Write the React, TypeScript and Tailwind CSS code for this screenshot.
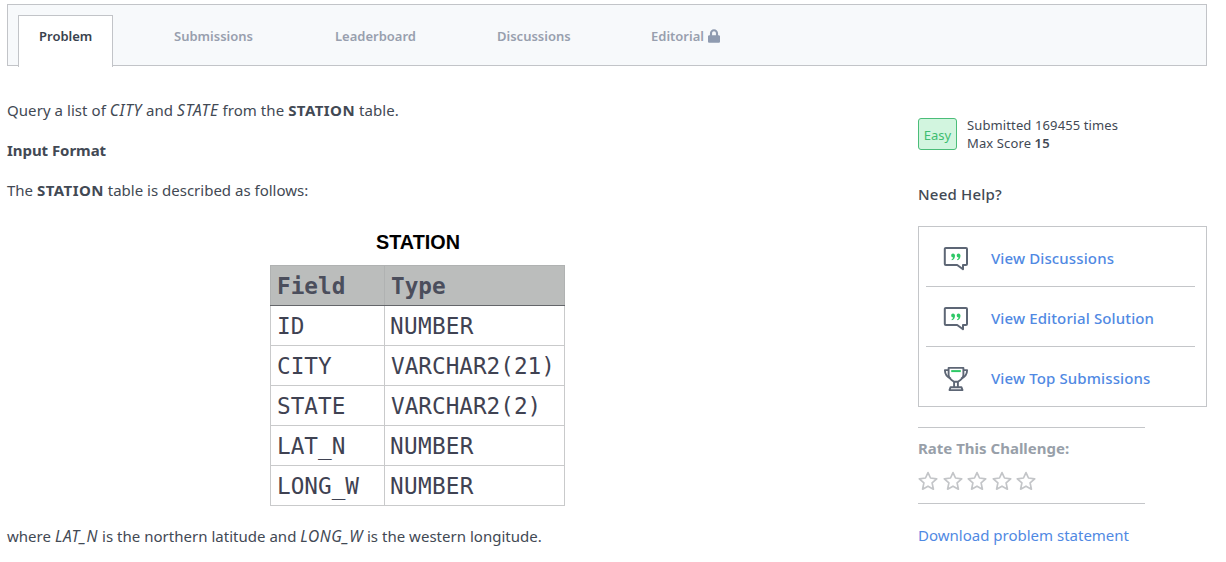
import React from "react";
import { FaLock } from "react-icons/fa";

const rows = [
  ["ID", "NUMBER"],
  ["CITY", "VARCHAR2(21)"],
  ["STATE", "VARCHAR2(2)"],
  ["LAT_N", "NUMBER"],
  ["LONG_W", "NUMBER"],
];

function DiscussionIcon() {
  return (
    <svg className="mt-1" width="26" height="26" viewBox="0 0 26 26" fill="none">
      <path d="M2.8 2H23a1 1 0 0 1 1 1v15a1 1 0 0 1-1 1h-3v4.300L14.200 19H2.800a1 1 0 0 1-1-1V3a1 1 0 0 1 1-1Z" stroke="#5d6675" strokeWidth="2" strokeLinejoin="round" />
      <g fill="#2ec866">
        <path d="M10 7.400c1.300 0 2 1 2 2.400 0 2.200-1.200 4-3.200 4.500l-.3-.8c1.100-.5 1.600-1.200 1.600-2-1.100 0-1.900-.8-1.900-2s.7-2.100 1.800-2.100Z" />
        <path d="M15.500 7.400c1.300 0 2 1 2 2.400 0 2.200-1.200 4-3.200 4.500l-.3-.8c1.100-.5 1.600-1.200 1.600-2-1.100 0-1.900-.8-1.900-2s.7-2.100 1.800-2.100Z" />
      </g>
    </svg>
  );
}

function TrophyIcon() {
  return (
    <svg className="mt-1" width="26" height="26" viewBox="0 0 26 26" fill="none" stroke="#5d6675" strokeWidth="1.900" strokeLinejoin="round">
      <path d="M5.600 1.900h14.800v7c0 3.300-3.300 5.400-5.600 6.900h-3.600c-2.300-1.500-5.600-3.600-5.600-6.900Z" />
      <path d="M5.600 4.100H1.900c0 4.200 1.900 6.900 6 8.600M20.400 4.100h3.700c0 4.200-1.900 6.900-6 8.600" />
      <path d="M11.100 16v5M14.900 16v5M7.500 21.200h11l1 2.900H6.500Z" />
      <path d="M8.200 5.100h9.600" stroke="#2ec866" strokeWidth="2" />
    </svg>
  );
}

function Star() {
  return (
    <svg width="20" height="20" viewBox="0 0 20 20" fill="none" stroke="#c3c5c8" strokeWidth="1.7" strokeLinejoin="round">
      <path d="M10 1.600l2.500 5.400 6.200.8-4.600 4 1.300 6.400L10 15.200l-5.400 3 1.300-6.400-4.600-4 6.200-.8Z" />
    </svg>
  );
}

function Em({ children }: { children: React.ReactNode }) {
  return <em className="text-[15.500px] tracking-[0.600px]">{children}</em>;
}

function HelpLink({ icon, children, last }: { icon: React.ReactNode; children: React.ReactNode; last?: boolean }) {
  return (
    <a className={last ? "flex h-[60px] items-center pl-[17px]" : "flex h-[60px] items-center border-b border-[#c4c6c9] pl-[17px]"}>
      {icon}
      <span className="ml-[22px] pt-[3px] text-[15px] font-medium tracking-[0.120px] text-[#5089e3]">{children}</span>
    </a>
  );
}

export default function App() {
  return (
    <div className="h-[562px] w-[1226px] overflow-hidden bg-white pl-[7px] pt-1 font-['Noto_Sans',sans-serif] text-[#424954]">
      <nav className="flex h-[62px] w-[1200px] border border-[#c2c4c8] bg-[#f7f9fb] pl-[10px] pt-[10px] text-[13px] font-semibold text-[#989fae]">
        <a className="h-[52px] w-[95px] shrink-0 border border-b-0 border-[#c2c4c8] bg-white pl-5 pt-[10px] leading-5 text-[#39424e]">Problem</a>
        <a className="ml-[61px] w-[161px] pt-[11px] leading-5">Submissions</a>
        <a className="w-[162px] pt-[11px] leading-5">Leaderboard</a>
        <a className="w-[154px] pt-[11px] leading-5">Discussions</a>
        <a className="flex pt-[11px] leading-5">Editorial<FaLock className="ml-1 mt-[3px] h-[14px] w-3 text-[#8f9bb0]" /></a>
      </nav>
      <div className="flex">
        <main className="w-[911px] pt-8 text-[15px] leading-6">
          <p className="tracking-[0.060px]">Query a list of <Em>CITY</Em> and <Em>STATE</Em> from the <strong className="tracking-[0.450px]">STATION</strong> table.</p>
          <p className="mt-4"><strong className="tracking-[-0.050px]">Input Format</strong></p>
          <p className="mt-4">The <strong className="tracking-[0.450px]">STATION</strong> table is described as follows:</p>
          <div className="ml-[263px] mt-[28px] w-[294px]">
            <h2 className="pl-[2px] text-center font-['Liberation_Sans',sans-serif] text-[19.800px] font-bold leading-6 text-black">STATION</h2>
            <table className="mt-[11px] w-[294px] table-fixed border-collapse font-['DejaVu_Sans_Mono',monospace] text-[22.700px] leading-[38px] text-[#3f4252]">
              <colgroup><col className="w-[114px]" /><col className="w-[180px]" /></colgroup>
              <thead>
                <tr className="h-[40px] bg-[#bbbdbc] text-left">
                  <th className="border border-[#b0b2b2] border-b-[#64666a] p-0 pl-[6px] pt-px text-[#4b4e5c]">Field</th>
                  <th className="border border-[#b0b2b2] border-b-[#64666a] p-0 pl-[6px] pt-px text-[#4b4e5c]">Type</th>
                </tr>
              </thead>
              <tbody>
                {rows.map(([field, type]) => (
                  <tr key={field} className="h-[40px]">
                    <td className="border border-[#c9cacb] p-0 pl-[6px] pt-px">{field}</td>
                    <td className={type === "NUMBER" ? "border border-[#c9cacb] p-0 pl-[5px] pt-px tracking-[0.300px]" : "border border-[#c9cacb] p-0 pl-[6px] pt-px"}>{type}</td>
                  </tr>
                ))}
              </tbody>
            </table>
          </div>
          <p className="mt-[18px] tracking-[0.020px]">where <Em>LAT_N</Em> is the northern latitude and <Em>LONG_W</Em> is the western longitude.</p>
        </main>
        <aside className="w-[289px] pt-[50px]">
          <div className="flex items-start">
            <span className="mt-[2px] h-8 w-[39px] rounded-[3px] border border-[#4bbd79] bg-[#d2f5df] text-center text-[13px] leading-[32px] text-[#3fbd70]">Easy</span>
            <div className="ml-[10px] text-[13px] leading-[18px] tracking-[0.120px]">
              <p>Submitted 169455 times</p>
              <p>Max Score <strong className="font-semibold">15</strong></p>
            </div>
          </div>
          <h3 className="mt-[30px] text-[15px] font-medium leading-6 tracking-[0.200px]">Need Help?</h3>
          <div className="mt-[20px] h-[181px] border border-[#c4c6c9] pl-[7px] pr-[11px]">
            <HelpLink icon={<DiscussionIcon />}>View Discussions</HelpLink>
            <HelpLink icon={<DiscussionIcon />}>View Editorial Solution</HelpLink>
            <HelpLink icon={<TrophyIcon />} last>View Top Submissions</HelpLink>
          </div>
          <div className="mt-5 h-[77px] w-[227px] border-y border-[#c4c6c9] pt-2">
            <h4 className="text-[15px] font-bold leading-6 text-[#989fa9]">Rate This Challenge:</h4>
            <div className="mt-[11px] flex gap-[4.600px]">
              {[1, 2, 3, 4, 5].map((n) => <Star key={n} />)}
            </div>
          </div>
          <a className="mt-[19px] block text-[15px] leading-6 text-[#5089e3]">Download problem statement</a>
        </aside>
      </div>
    </div>
  );
}
